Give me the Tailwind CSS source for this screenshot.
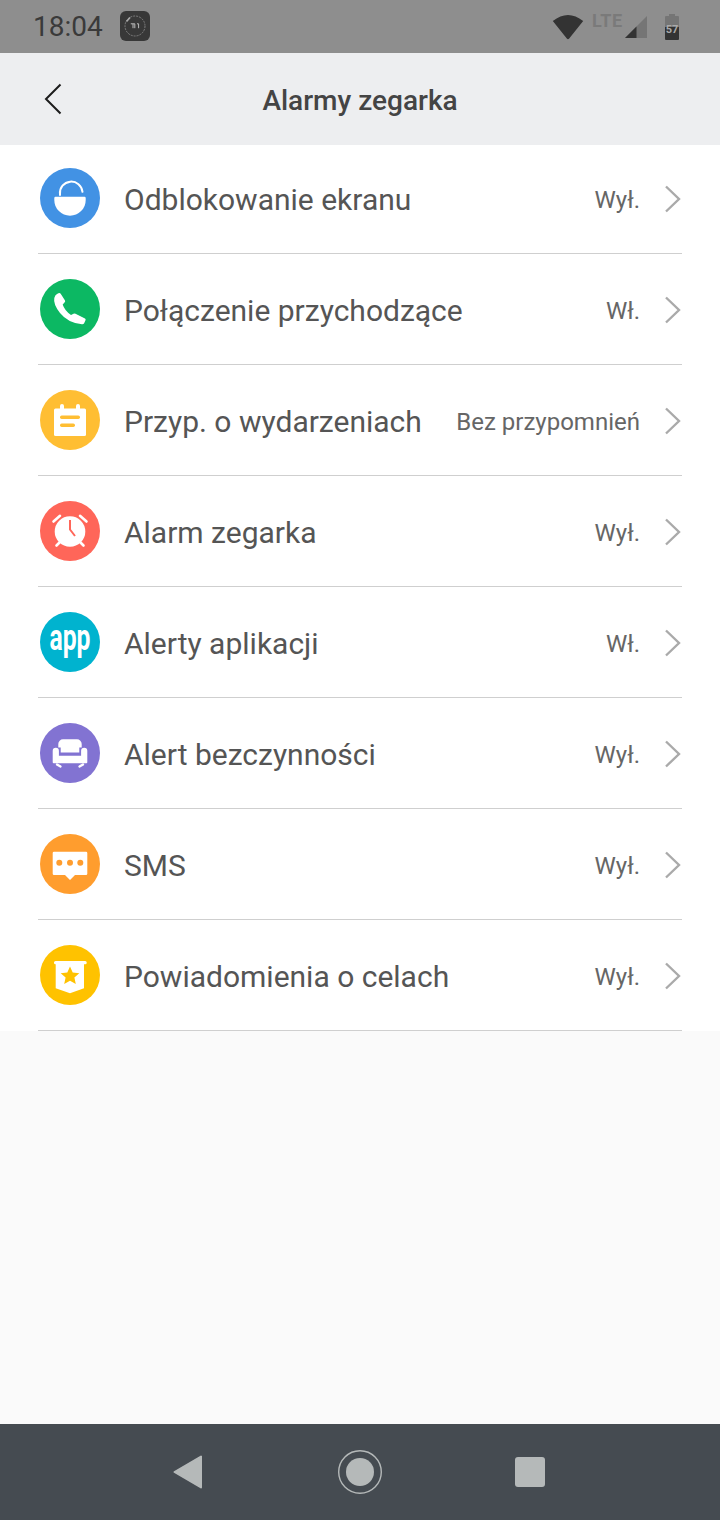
<!DOCTYPE html>
<html lang="en">
<head>
    <meta charset="UTF-8">
    <meta name="viewport" content="width=device-width, initial-scale=1.0">
    <title>Alarmy zegarka</title>
    <script src="https://cdn.jsdelivr.net/npm/@tailwindcss/browser@4"></script>
</head>
<body class="bg-[#fafafa] font-[Roboto,sans-serif] overflow-hidden">
<div class="w-[720px] h-[1520px] flex flex-col">

    <!-- Status bar -->
    <div class="relative z-20 h-[53px] bg-[#8e8e8e] flex items-center pl-[33px] pr-[41px] shrink-0">
        <span class="text-[28px] leading-none text-[#3a3a3a] w-[87px] mt-[1px]">18:04</span>
        <svg class="w-[30px] h-[30px] mt-[-1px]" viewBox="0 0 30 30">
            <rect width="30" height="30" rx="6" fill="#383838"/>
            <circle cx="15" cy="15" r="10" fill="none" stroke="#8e8e8e" stroke-width="0.8" stroke-dasharray="2 1"/>
            <path d="M6.5 10.5 L10 6.5" stroke="#aaa" stroke-width="1.6"/>
            <path d="M10.8 12.8h4v4.4M13 13v4.2M17 12.8h1.6v4.4" fill="none" stroke="#bbb" stroke-width="1"/>
        </svg>
        <div class="ml-auto flex items-center">
            <svg class="w-[32px] h-[26px]" viewBox="0 0 32 26">
                <path d="M0.8 7 Q16 -5 31.2 7 L17.2 24.5 Q16 26 14.8 24.5 Z" fill="#333"/>
            </svg>
            <span class="ml-[8px] mt-[-12px] w-[30px] text-[18px] leading-none font-bold text-[#7a7a7a] tracking-[0.5px]">LTE</span>
            <svg class="ml-[3px] w-[23px] h-[24px] mt-[1px]" viewBox="0 0 23 24">
                <path d="M0 23 L22 1 V23 Z" fill="#757575"/>
                <path d="M0 23 L11.5 11.5 V23 Z" fill="#333"/>
            </svg>
            <svg class="ml-[17px] w-[14px] h-[26px]" viewBox="0 0 14 26">
                <path d="M4 0h6v2h3a1 1 0 0 1 1 1v10H0V3a1 1 0 0 1 1-1h3z" fill="#757575"/>
                <path d="M0 13h14v12a1 1 0 0 1-1 1H1a1 1 0 0 1-1-1z" fill="#333"/>
                <text x="7" y="18.5" text-anchor="middle" font-size="11" font-weight="700" fill="#aaa" font-family="Roboto">57</text>
            </svg>
        </div>
    </div>

    <!-- Header -->
    <div class="relative z-10 h-[92px] bg-[#edeef0] flex items-center justify-center shrink-0">
        <svg class="absolute left-[44px] top-[30px] w-[18px] h-[32px]" viewBox="0 0 18 32">
            <path d="M16.5 1.5 L2 16 L16.5 30.5" fill="none" stroke="#1c1c1c" stroke-width="2"/>
        </svg>
        <h1 class="text-[28px] font-medium text-[#444] mt-[3px]">Alarmy zegarka</h1>
    </div>

    <!-- List -->
    <div class="bg-white mt-[-2px] px-[38px] shrink-0">

        <div class="h-[111px] border-b border-[#cfcfcf] flex items-center pl-[2px]">
            <svg class="w-[60px] h-[60px] shrink-0" viewBox="0 0 60 60">
                <circle cx="30" cy="30" r="30" fill="#4292e4"/>
                <path d="M15.5 28.7H44.5Q45.7 28.7 45.7 30V32A15.7 15.7 0 0 1 14.3 32V30Q14.3 28.7 15.5 28.7Z" fill="#fff"/>
                <path d="M20 27V26A11 11 0 0 1 42.5 23.8" fill="none" stroke="#fff" stroke-width="2" stroke-linecap="round"/>
            </svg>
            <span class="ml-[24px] text-[30px] text-[#555] mt-[2px]">Odblokowanie ekranu</span>
            <span class="ml-auto text-[24px] text-[#666] mt-[3px]">Wył.</span>
            <svg class="ml-[24px] mr-[1px] mt-[1px] w-[17px] h-[28px] shrink-0" viewBox="0 0 17 28">
                <path d="M2 1.5 L15 14 L2 26.5" fill="none" stroke="#aaa" stroke-width="2.4"/>
            </svg>
        </div>

        <div class="h-[111px] border-b border-[#cfcfcf] flex items-center pl-[2px]">
            <svg class="w-[60px] h-[60px] shrink-0" viewBox="0 0 60 60">
                <circle cx="30" cy="30" r="30" fill="#0cb863"/>
                <path fill="#fff" d="M17 15L19 14Q20 13.8 20.7 14.8L25 21.5Q25.5 22.7 24.5 23.5L22.7 25.5Q24.5 31.5 31 36L33.5 34.7Q34.5 34.2 35.5 34.7L45 39.5Q46 40.2 45.5 41.2L44 44.5Q43.3 45.5 42 45.3Q28 44 20 34Q13 25 14.3 19Q15 16 17 15Z"/>
            </svg>
            <span class="ml-[24px] text-[30px] text-[#555] mt-[2px]">Połączenie przychodzące</span>
            <span class="ml-auto text-[24px] text-[#666] mt-[3px]">Wł.</span>
            <svg class="ml-[24px] mr-[1px] mt-[1px] w-[17px] h-[28px] shrink-0" viewBox="0 0 17 28">
                <path d="M2 1.5 L15 14 L2 26.5" fill="none" stroke="#aaa" stroke-width="2.4"/>
            </svg>
        </div>

        <div class="h-[111px] border-b border-[#cfcfcf] flex items-center pl-[2px]">
            <svg class="w-[60px] h-[60px] shrink-0" viewBox="0 0 60 60">
                <circle cx="30" cy="30" r="30" fill="#ffbe33"/>
                <rect x="14" y="18.5" width="32" height="27.5" rx="1.5" fill="#fff"/>
                <rect x="20" y="14" width="4" height="8" rx="2" fill="#fff"/>
                <rect x="36" y="14" width="4" height="8" rx="2" fill="#fff"/>
                <rect x="20" y="25.5" width="20" height="3.5" rx="1.7" fill="#ffbe33"/>
                <rect x="20" y="33.5" width="15" height="3.5" rx="1.7" fill="#ffbe33"/>
            </svg>
            <span class="ml-[24px] text-[30px] text-[#555] mt-[2px]">Przyp. o wydarzeniach</span>
            <span class="ml-auto text-[24px] text-[#666] mt-[3px]">Bez przypomnień</span>
            <svg class="ml-[24px] mr-[1px] mt-[1px] w-[17px] h-[28px] shrink-0" viewBox="0 0 17 28">
                <path d="M2 1.5 L15 14 L2 26.5" fill="none" stroke="#aaa" stroke-width="2.4"/>
            </svg>
        </div>

        <div class="h-[111px] border-b border-[#cfcfcf] flex items-center pl-[2px]">
            <svg class="w-[60px] h-[60px] shrink-0" viewBox="0 0 60 60">
                <circle cx="30" cy="30" r="30" fill="#ff6659"/>
                <circle cx="30" cy="30.5" r="15.3" fill="#fff"/>
                <path d="M30 19V28.5L35 35" fill="none" stroke="#ff6659" stroke-width="2"/>
                <path d="M13.5 20.5L20 14.8M46.5 20.5L40 14.8M16.5 44.5L20 41M43.5 44.5L40 41" fill="none" stroke="#fff" stroke-width="2.6" stroke-linecap="round"/>
            </svg>
            <span class="ml-[24px] text-[30px] text-[#555] mt-[2px]">Alarm zegarka</span>
            <span class="ml-auto text-[24px] text-[#666] mt-[3px]">Wył.</span>
            <svg class="ml-[24px] mr-[1px] mt-[1px] w-[17px] h-[28px] shrink-0" viewBox="0 0 17 28">
                <path d="M2 1.5 L15 14 L2 26.5" fill="none" stroke="#aaa" stroke-width="2.4"/>
            </svg>
        </div>

        <div class="h-[111px] border-b border-[#cfcfcf] flex items-center pl-[2px]">
            <svg class="w-[60px] h-[60px] shrink-0" viewBox="0 0 60 60">
                <circle cx="30" cy="30" r="30" fill="#00b3cf"/>
                <text x="9.5" y="38" font-size="37" font-weight="700" fill="#fff" font-family="Roboto" textLength="41" lengthAdjust="spacingAndGlyphs">app</text>
            </svg>
            <span class="ml-[24px] text-[30px] text-[#555] mt-[2px]">Alerty aplikacji</span>
            <span class="ml-auto text-[24px] text-[#666] mt-[3px]">Wł.</span>
            <svg class="ml-[24px] mr-[1px] mt-[1px] w-[17px] h-[28px] shrink-0" viewBox="0 0 17 28">
                <path d="M2 1.5 L15 14 L2 26.5" fill="none" stroke="#aaa" stroke-width="2.4"/>
            </svg>
        </div>

        <div class="h-[111px] border-b border-[#cfcfcf] flex items-center pl-[2px]">
            <svg class="w-[60px] h-[60px] shrink-0" viewBox="0 0 60 60">
                <circle cx="30" cy="30" r="30" fill="#8273d2"/>
                <path d="M20.7 29.5V24.5H18.3V21A4.7 4.7 0 0 1 23 16.3H37A4.7 4.7 0 0 1 41.7 21V24.5H39.3V29.5Z" fill="#fff"/>
                <path d="M15.8 24.7A3.1 3.1 0 0 1 18.9 27.8V32.7H41.1V27.8A3.1 3.1 0 0 1 47.3 27.8V39.3A1 1 0 0 1 46.3 40.3H13.7A1 1 0 0 1 12.7 39.3V27.8A3.1 3.1 0 0 1 15.8 24.7Z" fill="#fff"/>
                <path d="M17 41.5L20.5 43.5M43 41.5L39.5 43.5" stroke="#fff" stroke-width="2.4" stroke-linecap="round"/>
            </svg>
            <span class="ml-[24px] text-[30px] text-[#555] mt-[2px]">Alert bezczynności</span>
            <span class="ml-auto text-[24px] text-[#666] mt-[3px]">Wył.</span>
            <svg class="ml-[24px] mr-[1px] mt-[1px] w-[17px] h-[28px] shrink-0" viewBox="0 0 17 28">
                <path d="M2 1.5 L15 14 L2 26.5" fill="none" stroke="#aaa" stroke-width="2.4"/>
            </svg>
        </div>

        <div class="h-[111px] border-b border-[#cfcfcf] flex items-center pl-[2px]">
            <svg class="w-[60px] h-[60px] shrink-0" viewBox="0 0 60 60">
                <circle cx="30" cy="30" r="30" fill="#ff9d2e"/>
                <path d="M14 17.7H46A1.3 1.3 0 0 1 47.3 19V39.7A1.3 1.3 0 0 1 46 41H35L30 46L25 41H14A1.3 1.3 0 0 1 12.7 39.7V19A1.3 1.3 0 0 1 14 17.7Z" fill="#fff"/>
                <circle cx="19.3" cy="28.7" r="3" fill="#ff9d2e"/>
                <circle cx="30" cy="28.7" r="3" fill="#ff9d2e"/>
                <circle cx="40.3" cy="28.7" r="3" fill="#ff9d2e"/>
            </svg>
            <span class="ml-[24px] text-[30px] text-[#555] mt-[2px]">SMS</span>
            <span class="ml-auto text-[24px] text-[#666] mt-[3px]">Wył.</span>
            <svg class="ml-[24px] mr-[1px] mt-[1px] w-[17px] h-[28px] shrink-0" viewBox="0 0 17 28">
                <path d="M2 1.5 L15 14 L2 26.5" fill="none" stroke="#aaa" stroke-width="2.4"/>
            </svg>
        </div>

        <div class="h-[111px] border-b border-[#cfcfcf] flex items-center pl-[2px]">
            <svg class="w-[60px] h-[60px] shrink-0" viewBox="0 0 60 60">
                <circle cx="30" cy="30" r="30" fill="#ffc200"/>
                <rect x="14" y="16" width="32.7" height="3.3" rx="1.6" fill="#fff"/>
                <path d="M15.7 18H44V43.3L30 48.3L15.7 43.3Z" fill="#fff"/>
                <path d="M30 21.5L32.7 27.5L39.3 28.2L34.4 32.6L35.8 39.1L30 35.8L24.2 39.1L25.6 32.6L20.7 28.2L27.3 27.5Z" fill="#ffc200"/>
            </svg>
            <span class="ml-[24px] text-[30px] text-[#555] mt-[2px]">Powiadomienia o celach</span>
            <span class="ml-auto text-[24px] text-[#666] mt-[3px]">Wył.</span>
            <svg class="ml-[24px] mr-[1px] mt-[1px] w-[17px] h-[28px] shrink-0" viewBox="0 0 17 28">
                <path d="M2 1.5 L15 14 L2 26.5" fill="none" stroke="#aaa" stroke-width="2.4"/>
            </svg>
        </div>
    </div>

    <!-- Navigation bar -->
    <div class="mt-auto h-[96px] bg-[#454b51] flex items-center pl-[173px] shrink-0">
        <svg class="w-[30px] h-[34px]" viewBox="0 0 30 34">
            <path d="M28 1.5V32.5L1.5 17Z" fill="#b5b9b9" stroke="#b5b9b9" stroke-width="2" stroke-linejoin="round"/>
        </svg>
        <svg class="ml-[135px] w-[44px] h-[44px]" viewBox="0 0 44 44">
            <circle cx="22" cy="22" r="21.3" fill="none" stroke="#b5b9b9" stroke-width="1.4"/>
            <circle cx="22" cy="22" r="14" fill="#b5b9b9"/>
        </svg>
        <div class="ml-[133px] w-[30px] h-[30px] rounded-[3px] bg-[#b5b9b9]"></div>
    </div>
</div>
</body>
</html>
